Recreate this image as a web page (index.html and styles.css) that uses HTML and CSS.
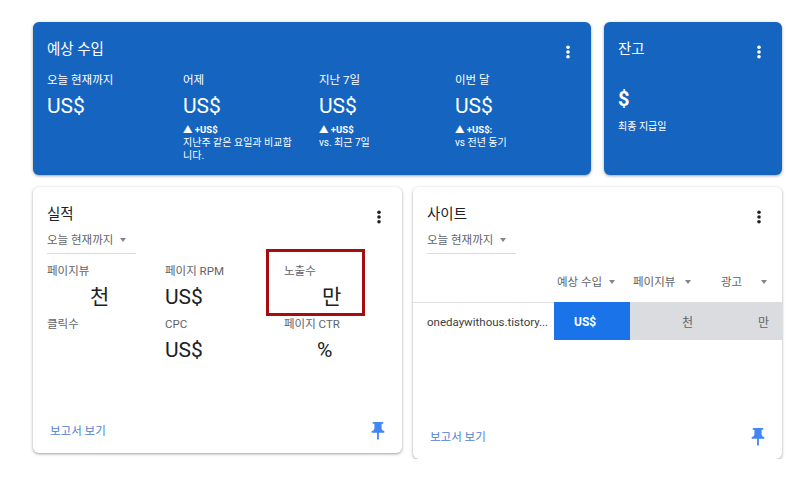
FILE: index.html
```html
<!DOCTYPE html>
<html>
<head>
    <title>AdSense 홈</title>
    <link rel="stylesheet" href="styles.css">
</head>
<body>
    <div class="dashboard">
        <div class="row row-top">
            <section class="card card-blue card-earnings">
                <div class="card-header">
                    <h2 class="card-title">예상 수입</h2>
                    <svg class="kebab" width="4" height="14" viewBox="0 0 4 14"><circle cx="2" cy="2.2" r="1.8"/><circle cx="2" cy="7" r="1.8"/><circle cx="2" cy="11.8" r="1.8"/></svg>
                </div>
                <div class="earnings-cols">
                    <div class="earnings-col">
                        <div class="earnings-label">오늘 현재까지</div>
                        <div class="earnings-value">US$</div>
                    </div>
                    <div class="earnings-col">
                        <div class="earnings-label">어제</div>
                        <div class="earnings-value">US$</div>
                        <div class="earnings-delta">▲ +US$</div>
                        <div class="earnings-desc">지난주 같은 요일과 비교합니다.</div>
                    </div>
                    <div class="earnings-col">
                        <div class="earnings-label">지난 7일</div>
                        <div class="earnings-value">US$</div>
                        <div class="earnings-delta">▲ +US$</div>
                        <div class="earnings-desc">vs. 최근 7일</div>
                    </div>
                    <div class="earnings-col">
                        <div class="earnings-label">이번 달</div>
                        <div class="earnings-value">US$</div>
                        <div class="earnings-delta">▲ +US$:</div>
                        <div class="earnings-desc">vs 전년 동기</div>
                    </div>
                </div>
            </section>

            <section class="card card-blue card-balance">
                <div class="card-header">
                    <h2 class="card-title">잔고</h2>
                    <svg class="kebab" width="4" height="14" viewBox="0 0 4 14"><circle cx="2" cy="2.2" r="1.8"/><circle cx="2" cy="7" r="1.8"/><circle cx="2" cy="11.8" r="1.8"/></svg>
                </div>
                <div class="balance-value">$</div>
                <div class="balance-desc">최종 지급일</div>
            </section>
        </div>

        <div class="row row-bottom">
            <section class="card card-white card-performance">
                <div class="card-header">
                    <h2 class="card-title">실적</h2>
                    <svg class="kebab" width="4" height="14" viewBox="0 0 4 14"><circle cx="2" cy="2.2" r="1.8"/><circle cx="2" cy="7" r="1.8"/><circle cx="2" cy="11.8" r="1.8"/></svg>
                </div>
                <div class="range-select">오늘 현재까지 <span class="caret"></span></div>

                <div class="metrics">
                    <div class="metric">
                        <div class="metric-label">페이지뷰</div>
                        <div class="metric-value pad-thousand">천</div>
                    </div>
                    <div class="metric">
                        <div class="metric-label">페이지 RPM</div>
                        <div class="metric-value">US$</div>
                    </div>
                    <div class="metric metric-marked">
                        <div class="metric-label">노출수</div>
                        <div class="metric-value pad-tenthousand">만</div>
                        <div class="highlight-box"></div>
                    </div>
                    <div class="metric">
                        <div class="metric-label">클릭수</div>
                        <div class="metric-value"></div>
                    </div>
                    <div class="metric">
                        <div class="metric-label">CPC</div>
                        <div class="metric-value">US$</div>
                    </div>
                    <div class="metric">
                        <div class="metric-label">페이지 CTR</div>
                        <div class="metric-value pad-percent">%</div>
                    </div>
                </div>

                <div class="card-footer">
                    <a class="report-link">보고서 보기</a>
                    <svg class="pin" width="16" height="18" viewBox="4 2 16 20"><path d="M16 9V4h1c.55 0 1-.45 1-1s-.45-1-1-1H7c-.55 0-1 .45-1 1s.45 1 1 1h1v5c0 1.66-1.34 3-3 3v2h5.97v7l1 1 1-1v-7H19v-2c-1.66 0-3-1.34-3-3z"/></svg>
                </div>
            </section>

            <section class="card card-white card-sites">
                <div class="card-header">
                    <h2 class="card-title">사이트</h2>
                    <svg class="kebab" width="4" height="14" viewBox="0 0 4 14"><circle cx="2" cy="2.2" r="1.8"/><circle cx="2" cy="7" r="1.8"/><circle cx="2" cy="11.8" r="1.8"/></svg>
                </div>
                <div class="range-select">오늘 현재까지 <span class="caret"></span></div>

                <div class="sites-table">
                    <div class="th"></div>
                    <div class="th">예상 수입 <span class="caret"></span></div>
                    <div class="th">페이지뷰 <span class="caret"></span></div>
                    <div class="th th-short">광고 <span class="caret"></span></div>

                    <div class="td td-site">onedaywithous.tistory...</div>
                    <div class="td td-earnings">US$</div>
                    <div class="td td-bar">천</div>
                    <div class="td td-bar">만</div>
                </div>

                <div class="card-footer">
                    <a class="report-link">보고서 보기</a>
                    <svg class="pin" width="16" height="18" viewBox="4 2 16 20"><path d="M16 9V4h1c.55 0 1-.45 1-1s-.45-1-1-1H7c-.55 0-1 .45-1 1s.45 1 1 1h1v5c0 1.66-1.34 3-3 3v2h5.97v7l1 1 1-1v-7H19v-2c-1.66 0-3-1.34-3-3z"/></svg>
                </div>
            </section>
        </div>
    </div>
</body>
</html>
```

FILE: styles.css
```css
body {
    margin: 0;
    padding: 22px 0 0 33px;
    background: #fff;
    font-family: "Roboto", "Noto Sans CJK KR", sans-serif;
    color: #202124;
}
.dashboard {
    width: 749px;
}
.row {
    display: flex;
    align-items: flex-start;
}
.row-top {
    gap: 13px;
}
.row-bottom {
    gap: 11px;
    margin-top: 12px;
}
.card {
    box-sizing: border-box;
    border-radius: 6px;
    padding: 17px 21px 0 14px;
    box-shadow: 0 1px 2px rgba(60, 64, 67, 0.3), 0 1px 3px 1px rgba(60, 64, 67, 0.15);
}
.card-blue {
    background: #1565c0;
    color: #fff;
    height: 153px;
}
.card-white {
    background: #fff;
    display: flex;
    flex-direction: column;
    width: 369px;
}
.card-earnings {
    width: 558px;
}
.card-balance {
    width: 178px;
}
.card-performance {
    height: 266px;
}
.card-sites {
    height: 272px;
}
.card-header {
    display: flex;
    justify-content: space-between;
    align-items: center;
    height: 22px;
}
.card-title {
    margin: 0;
    font-size: 14.5px;
    font-weight: normal;
    line-height: 22px;
}
.kebab {
    fill: currentColor;
    margin-top: 3px;
}

/* earnings */
.earnings-cols {
    display: grid;
    grid-template-columns: 136px 136px 136px 1fr;
    margin-top: 11px;
}
.earnings-label {
    font-size: 11.5px;
    line-height: 16px;
}
.earnings-value {
    font-size: 21px;
    line-height: 26px;
    margin-top: 5px;
}
.earnings-delta {
    font-size: 9.5px;
    font-weight: bold;
    line-height: 12px;
    margin-top: 5px;
}
.earnings-desc {
    font-size: 10px;
    line-height: 13px;
    width: 116px;
}

/* balance */
.balance-value {
    font-size: 20px;
    font-weight: bold;
    line-height: 24px;
    margin-top: 26px;
}
.balance-desc {
    font-size: 10px;
    line-height: 13px;
    margin-top: 9px;
}

/* white cards */
.range-select {
    display: flex;
    align-items: center;
    gap: 7px;
    width: 89px;
    margin-top: 6px;
    padding-bottom: 5px;
    border-bottom: 1px solid #dadce0;
    font-size: 11.5px;
    line-height: 16px;
    color: #5f6368;
    white-space: nowrap;
}
.caret {
    display: inline-block;
    width: 0;
    height: 0;
    border-left: 3.5px solid transparent;
    border-right: 3.5px solid transparent;
    border-top: 4px solid #80868b;
}
.metrics {
    display: grid;
    grid-template-columns: 118px 119px 1fr;
    row-gap: 6px;
    margin-top: 9px;
}
.metric {
    position: relative;
}
.metric-label {
    font-size: 11.5px;
    line-height: 16px;
    color: #5f6368;
}
.metric-value {
    font-size: 21px;
    line-height: 26px;
    height: 26px;
    margin-top: 5px;
}
.pad-thousand {
    padding-left: 43px;
}
.pad-tenthousand {
    padding-left: 38px;
}
.pad-percent {
    padding-left: 33px;
}
.highlight-box {
    position: absolute;
    left: -18px;
    top: -14px;
    width: 93px;
    height: 61px;
    border: 3px solid #a50e0e;
}
.card-footer {
    margin-top: auto;
    padding: 0 0 14px 3px;
    display: flex;
    justify-content: space-between;
    align-items: center;
    height: 16px;
}
.report-link {
    font-size: 11.5px;
    line-height: 16px;
    color: #4f80d6;
}
.pin {
    fill: #4285f4;
    margin-right: -5px;
}

/* sites table */
.sites-table {
    display: grid;
    grid-template-columns: 1fr 76px 76px 76px;
    margin: 20px -21px 0 -14px;
}
.th {
    display: flex;
    justify-content: space-between;
    align-items: center;
    padding: 0 15px 12px 3px;
    font-size: 11.5px;
    line-height: 16px;
    color: #5f6368;
    white-space: nowrap;
}
.th-short {
    padding-left: 15px;
}
.td {
    height: 37px;
    border-top: 1px solid #e0e0e0;
    display: flex;
    align-items: center;
    font-size: 12px;
}
.td-site {
    padding-left: 14px;
    font-size: 11.5px;
    color: #3c4043;
    white-space: nowrap;
    min-width: 0;
}
.td-earnings {
    background: #1a73e8;
    border-top-color: #1a73e8;
    color: #fff;
    font-weight: bold;
    padding-left: 20px;
}
.td-bar {
    background: #dadce0;
    border-top-color: #dadce0;
    color: #5f6368;
    justify-content: flex-end;
    padding-right: 13px;
}
```
